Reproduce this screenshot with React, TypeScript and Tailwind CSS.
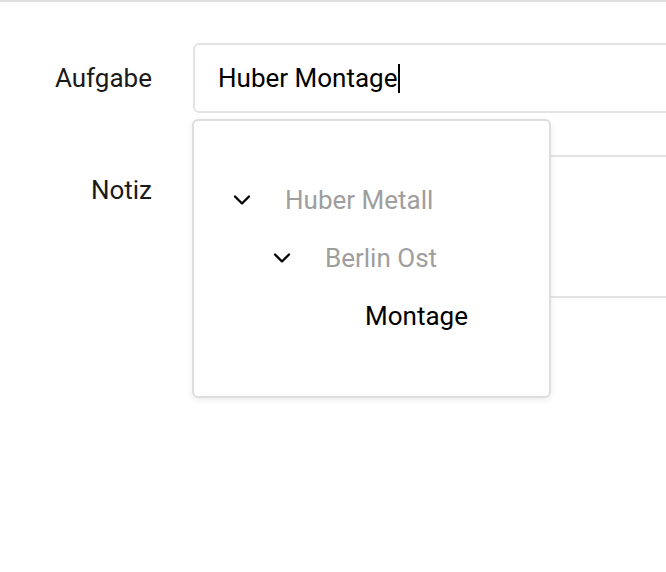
import { ChevronDown } from 'lucide-react'

const tree = [
  { label: 'Huber Metall', depth: 0, open: true, muted: true },
  { label: 'Berlin Ost', depth: 1, open: true, muted: true },
  { label: 'Montage', depth: 2, open: false, muted: false },
]

export default function App() {
  return (
    <div className="relative w-[666px] h-[572px] overflow-hidden bg-white border-t-2 border-[#e0e0e0] font-['Roboto',sans-serif]">
      <div className="flex flex-col gap-[42px] pt-[41px]">
        {/* Aufgabe */}
        <div className="flex gap-[41px]">
          <div className="w-[152px] shrink-0 h-[70px] flex items-center justify-end text-[26px] text-[#1a1a1a]">
            Aufgabe
          </div>
          <div className="w-[520px] h-[70px] shrink-0 flex items-center pl-[23px] border-2 border-[#e3e3e3] rounded-[6px] text-[26px] text-black">
            Huber Montage
            <span className="inline-block w-[2px] h-[29px] bg-black ml-[1px]" />
          </div>
        </div>

        {/* Notiz */}
        <div className="flex gap-[41px]">
          <div className="w-[152px] shrink-0 h-[70px] flex items-center justify-end text-[26px] text-[#1a1a1a]">
            Notiz
          </div>
          <div className="w-[520px] h-[143px] shrink-0 border-2 border-[#e3e3e3] rounded-[6px]" />
        </div>
      </div>

      {/* dropdown */}
      <div className="absolute left-[192px] top-[117px] w-[359px] h-[279px] bg-white border-2 border-[#dedede] rounded-[6px] shadow-[0_2px_6px_rgba(0,0,0,0.08)] py-[50px]">
        {tree.map((item) => (
          <div
            key={item.label}
            className="h-[58px] flex items-center"
            style={{ paddingLeft: 41 + item.depth * 40 }}
          >
            <div className="w-[50px] flex items-center">
              {item.open && <ChevronDown size={28} strokeWidth={2} className="text-black -ml-[7px]" />}
            </div>
            <span className={`text-[26px] ${item.muted ? 'text-[#9e9e9e]' : 'text-black'}`}>{item.label}</span>
          </div>
        ))}
      </div>
    </div>
  )
}
